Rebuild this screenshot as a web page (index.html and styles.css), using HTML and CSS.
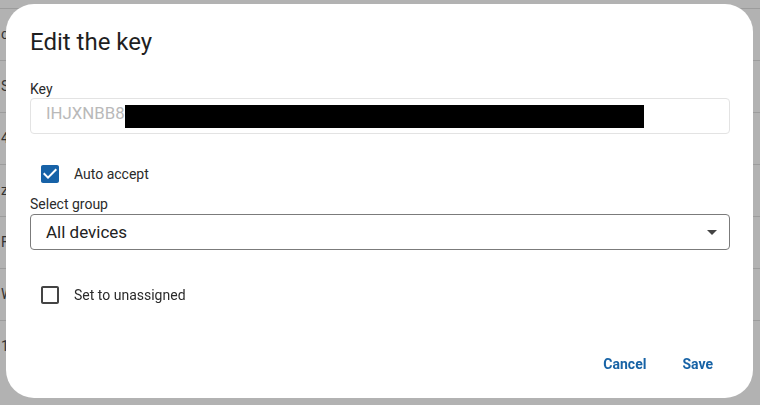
FILE: index.html
```html
<!DOCTYPE html>
<html lang="en">
<head>
<meta charset="utf-8">
<title>Edit the key</title>
<link rel="stylesheet" href="styles.css">
</head>
<body>
<div class="table">
  <div class="row"><span class="cell">c</span></div>
  <div class="row"><span class="cell">S</span></div>
  <div class="row"><span class="cell">4</span></div>
  <div class="row"><span class="cell">z</span></div>
  <div class="row"><span class="cell">F</span></div>
  <div class="row"><span class="cell">W</span></div>
  <div class="row last"><span class="cell">1</span></div>
</div>

<div class="overlay">
  <div class="dialog" role="dialog" aria-labelledby="dlg-title">
    <h2 class="title" id="dlg-title">Edit the key</h2>

    <div class="field-label key-label">Key</div>
    <div class="input">
      <span class="input-text">IHJXNBB8</span><span class="redact"></span>
    </div>

    <label class="check-row">
      <svg class="cb cb-on" viewBox="0 0 24 24" width="24" height="24" aria-hidden="true">
        <path d="M19 3H5c-1.11 0-2 .9-2 2v14c0 1.1.89 2 2 2h14c1.11 0 2-.9 2-2V5c0-1.1-.89-2-2-2zm-9 14l-5-5 1.41-1.41L10 14.17l7.59-7.59L19 8l-9 9z"/>
      </svg>
      <span class="check-text">Auto accept</span>
    </label>

    <div class="field-label group-label">Select group</div>
    <div class="select">
      <span class="select-text">All devices</span>
      <svg class="arrow" viewBox="0 0 24 24" width="24" height="24" aria-hidden="true">
        <path d="M7 10l5 5 5-5z"/>
      </svg>
    </div>

    <label class="check-row unassigned">
      <svg class="cb cb-off" viewBox="0 0 24 24" width="24" height="24" aria-hidden="true">
        <path d="M19 5v14H5V5h14m0-2H5c-1.1 0-2 .9-2 2v14c0 1.1.9 2 2 2h14c1.1 0 2-.9 2-2V5c0-1.1-.9-2-2-2z"/>
      </svg>
      <span class="check-text">Set to unassigned</span>
    </label>

    <div class="actions">
      <button class="btn" type="button">Cancel</button>
      <button class="btn" type="button">Save</button>
    </div>
  </div>
</div>
</body>
</html>
```

FILE: styles.css
```css
html, body {
  margin: 0;
  padding: 0;
}

body {
  background: #ffffff;
  font-family: Roboto, "Liberation Sans", Arial, sans-serif;
  color: #222222;
}

/* background table (dimmed by the overlay) */
.table {
  margin-top: 8px;
  border-top: 1px solid #e0e0e0;
}

.row {
  height: 51px;
  line-height: 51px;
  border-bottom: 1px solid #e0e0e0;
  padding-left: 1px;
  font-size: 14px;
  color: #4a4a4a;
  white-space: nowrap;
}

.row.last {
  border-bottom: 0;
}

.cell {
  display: inline-block;
}

/* modal */
.overlay {
  position: fixed;
  inset: 0;
  background: rgba(0, 0, 0, 0.3);
  display: flex;
  padding: 4px 7px 7px 6px;
  box-sizing: border-box;
}

.dialog {
  flex: 1;
  background: #ffffff;
  border-radius: 28px;
  padding: 22px 23px 0 24px;
  box-sizing: border-box;
  display: flex;
  flex-direction: column;
}

.title {
  margin: 0;
  font-size: 24px;
  line-height: 32px;
  font-weight: 400;
  color: #1f1f1f;
}

.field-label {
  font-size: 14px;
  line-height: 18px;
  color: #2b2b2b;
}

.key-label {
  margin-top: 22px;
}

.input {
  height: 36px;
  box-sizing: border-box;
  border: 1px solid #e3e3e3;
  border-radius: 4px;
  display: flex;
  align-items: center;
  padding-left: 15px;
}

.input-text {
  font-size: 16.8px;
  line-height: 20px;
  color: #b9b9b9;
  padding-bottom: 6px;
}

.redact {
  width: 519px;
  height: 23px;
  background: #000000;
}

.check-row {
  margin-top: 19px;
  height: 42px;
  display: flex;
  align-items: center;
  font-size: 14px;
  color: #2a2a2a;
}

.cb {
  display: block;
  margin-left: 8px;
  flex: none;
}

.cb-on {
  fill: #1762a7;
}

.cb-off {
  fill: #444444;
}

.check-text {
  margin-left: 12px;
}

.select {
  margin-top: 1px;
  height: 36px;
  box-sizing: border-box;
  border: 1px solid #7b7b7b;
  border-radius: 4px;
  display: flex;
  align-items: center;
  justify-content: space-between;
  padding: 0 5px 0 15px;
}

.select-text {
  font-size: 17px;
  line-height: 20px;
  color: #222222;
}

.arrow {
  display: block;
  fill: #444444;
}

.check-row.unassigned {
  margin-top: 24px;
}

.actions {
  margin-top: auto;
  display: flex;
  justify-content: flex-end;
  gap: 20px;
  padding: 0 9px 16px 0;
}

.btn {
  height: 36px;
  line-height: 36px;
  padding: 0 8px;
  border: 0;
  background: none;
  font-family: Roboto, "Liberation Sans", Arial, sans-serif;
  font-size: 14px;
  font-weight: 700;
  color: #1763a6;
  cursor: pointer;
}
```
